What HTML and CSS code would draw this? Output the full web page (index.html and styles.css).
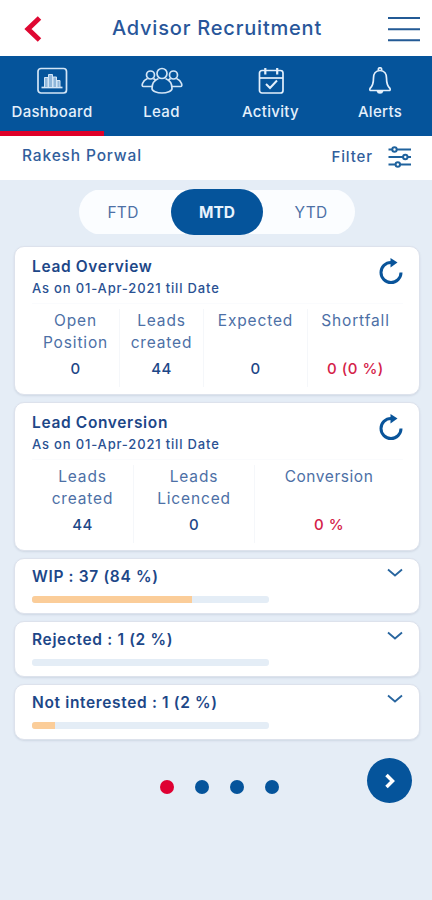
FILE: index.html
```html
<!DOCTYPE html>
<html lang="en">
<head>
    <meta charset="UTF-8">
    <meta name="viewport" content="width=device-width, initial-scale=1.0">
    <title>Advisor Recruitment</title>
    <link rel="stylesheet" href="styles.css">
</head>
<body>

<header class="header">
    <svg class="back" width="18" height="26" viewBox="0 0 18 26"><path d="M15.500 2 4 13l11.500 11" fill="none" stroke="#df0832" stroke-width="5"/></svg>
    <h1>Advisor Recruitment</h1>
    <svg class="menu" width="34" height="26" viewBox="0 0 34 26"><path d="M1 2h32M1 13.300h32M1 24.300h32" stroke="#235a95" stroke-width="2"/></svg>
</header>

<nav class="nav">
    <a class="nav-item active">
        <svg width="32" height="28" viewBox="0 0 32 28" fill="none" stroke="#d3e5f6" stroke-width="1.700">
            <rect x="2" y="1.500" width="28.500" height="24.500" rx="3"/>
            <path d="M5.500 20.500h21"/>
            <path d="M8.500 20V10.500h3.500V20M12.500 20V7.500h4V20M17 20V10h3.500v10M21 20v-6.500h3V20" fill="#8fb6da" stroke-width="1"/>
        </svg>
        <span>Dashboard</span>
    </a>
    <a class="nav-item">
        <svg width="42" height="28" viewBox="0 0 42 28" fill="none" stroke="#d3e5f6" stroke-width="1.700" stroke-linejoin="round">
            <circle cx="21" cy="6.500" r="5"/>
            <circle cx="9.500" cy="8" r="4"/>
            <circle cx="32.500" cy="8" r="4"/>
            <path d="M17.500 11.500c-4 1.500-6.500 5.500-6.500 10 0 2.500 5 4.500 10 4.500s10-2 10-4.500c0-4.500-2.500-8.500-6.500-10"/>
            <path d="M11 19.500H2.500C1 19.500 1 18 1.500 16.500c1-2.500 2.500-4 5-5M12.500 11.500l2.500 2M31 19.500h8.500c1.500 0 1.500-1.500 1-3-1-2.500-2.500-4-5-5M29.500 11.500l-2.500 2"/>
        </svg>
        <span>Lead</span>
    </a>
    <a class="nav-item">
        <svg width="28" height="28" viewBox="0 0 28 28" fill="none" stroke="#e4f0fc" stroke-width="1.700">
            <rect x="2.500" y="3.500" width="23.500" height="22.500" rx="2.500"/>
            <path d="M3 11h23"/>
            <path d="M8.300 1v6.500M20.200 1v6.500" stroke-width="2.200"/>
            <path d="m9 17 4 4 7-7.500" stroke-width="2"/>
        </svg>
        <span>Activity</span>
    </a>
    <a class="nav-item">
        <svg width="24" height="28" viewBox="0 0 24 28" fill="none" stroke="#e4f0fc" stroke-width="1.700" stroke-linejoin="round">
            <path d="M12 3.500c-4.500 0-6.500 3.500-6.500 7.500 0 5-.7 8-3.500 10.500-.5 1.500 0 2 1 2h18c1 0 1.500-.5 1-2-2.800-2.500-3.500-5.500-3.500-10.500 0-4-2-7.500-6.500-7.500z"/>
            <path d="M10.500 3.500C10 1 11 .8 12 .8s2 .2 1.500 2.700"/>
            <path d="M9.500 24c.5 2.500 4.500 2.500 5 0z" fill="#e4f0fc"/>
        </svg>
        <span>Alerts</span>
    </a>
</nav>

<div class="subbar">
    <span class="user">Rakesh Porwal</span>
    <span class="filter">Filter</span>
    <svg width="24" height="22" viewBox="0 0 24 22" fill="none" stroke="#1f629d" stroke-width="2">
        <path d="M.5 3.500h4M8.500 3.500h14.500M.5 11h14.500M19.500 11h3.500M.5 18.500h7M12 18.500h11"/>
        <circle cx="6.500" cy="3.500" r="2.200"/>
        <circle cx="17.300" cy="11" r="2.200"/>
        <circle cx="9.800" cy="18.500" r="2.200"/>
    </svg>
</div>

<main class="content">
    <div class="toggle">
        <button>FTD</button>
        <button class="selected">MTD</button>
        <button class="last">YTD</button>
    </div>

    <section class="card stats-card">
        <div class="card-head">
            <div>
                <h2>Lead Overview</h2>
                <p>As on 01-Apr-2021 till Date</p>
            </div>
            <svg class="refresh" width="24" height="26" viewBox="0 0 24 26"><path d="M12 4.500A10 10 0 1 0 22 14.500" fill="none" stroke="#09549a" stroke-width="3"/><path d="M11.500 0 18.500 4.500l-7 5z" fill="#09549a"/></svg>
        </div>
        <div class="stats overview">
            <div class="stat"><span>Open<br>Position</span><b>0</b></div>
            <div class="stat"><span>Leads<br>created</span><b>44</b></div>
            <div class="stat"><span>Expected</span><b>0</b></div>
            <div class="stat"><span>Shortfall</span><b class="red">0 (0 %)</b></div>
        </div>
    </section>

    <section class="card stats-card">
        <div class="card-head">
            <div>
                <h2>Lead Conversion</h2>
                <p>As on 01-Apr-2021 till Date</p>
            </div>
            <svg class="refresh" width="24" height="26" viewBox="0 0 24 26"><path d="M12 4.500A10 10 0 1 0 22 14.500" fill="none" stroke="#09549a" stroke-width="3"/><path d="M11.500 0 18.500 4.500l-7 5z" fill="#09549a"/></svg>
        </div>
        <div class="stats conversion">
            <div class="stat"><span>Leads<br>created</span><b>44</b></div>
            <div class="stat"><span>Leads<br>Licenced</span><b>0</b></div>
            <div class="stat"><span class="tight">Conversion</span><b class="red">0 %</b></div>
        </div>
    </section>

    <section class="card row-card">
        <div class="row-head">
            <h2>WIP : 37 (84 %)</h2>
            <svg width="16" height="10" viewBox="0 0 16 10"><path d="m1 1.500 7 6 7-6" fill="none" stroke="#28659f" stroke-width="1.800"/></svg>
        </div>
        <div class="bar"><div class="fill" style="width: 67.600%"></div></div>
    </section>

    <section class="card row-card">
        <div class="row-head">
            <h2>Rejected : 1 (2 %)</h2>
            <svg width="16" height="10" viewBox="0 0 16 10"><path d="m1 1.500 7 6 7-6" fill="none" stroke="#28659f" stroke-width="1.800"/></svg>
        </div>
        <div class="bar"></div>
    </section>

    <section class="card row-card">
        <div class="row-head">
            <h2>Not interested : 1 (2 %)</h2>
            <svg width="16" height="10" viewBox="0 0 16 10"><path d="m1 1.500 7 6 7-6" fill="none" stroke="#28659f" stroke-width="1.800"/></svg>
        </div>
        <div class="bar"><div class="fill" style="width: 9.700%"></div></div>
    </section>

    <div class="pager">
        <i class="dot current"></i>
        <i class="dot"></i>
        <i class="dot"></i>
        <i class="dot"></i>
        <button class="next"><svg width="12" height="16" viewBox="0 0 12 16"><path d="m2.500 2 6 6-6 6" fill="none" stroke="#fff" stroke-width="3.500"/></svg></button>
    </div>
</main>

</body>
</html>
```

FILE: styles.css
```css
* {
    box-sizing: border-box;
}

body {
    margin: 0;
    min-height: 900px;
    background-color: #e5edf6;
    color: #1d4788;
    font-family: 'Inter', sans-serif;
    font-size: 15px;
}

h1, h2, p {
    margin: 0;
}

svg {
    display: block;
    flex: none;
}

button {
    border: none;
    padding: 0;
    background: none;
    font-family: inherit;
    cursor: pointer;
}

.header {
    height: 56px;
    padding: 0 11px 0 24px;
    display: flex;
    align-items: center;
    justify-content: space-between;
    background-color: #fff;
}

.header h1 {
    margin-left: 5px;
    font-size: 20px;
    font-weight: 500;
    letter-spacing: 0.800px;
    color: #28569a;
    white-space: nowrap;
}

.back,
.menu {
    margin-top: 2px;
}

/* Navigation */
.nav {
    height: 80px;
    display: grid;
    grid-template-columns: 104px 115px 103px 110px;
    background-color: #05549b;
    color: #e4f0fc;
}

.nav-item {
    padding-top: 11px;
    display: flex;
    flex-direction: column;
    align-items: center;
    gap: 8px;
    font-size: 15px;
    line-height: 18px;
    font-weight: 500;
    letter-spacing: 0.300px;
}

.nav-item.active {
    border-bottom: 5px solid #df0028;
}

.nav-item:last-child {
    padding-left: 6px;
}

.subbar {
    height: 44px;
    padding: 0 20px 3px 22px;
    display: flex;
    align-items: center;
    background-color: #fff;
    color: #315e9c;
    font-weight: 500;
}

.user {
    margin: 0 auto 3px 0;
    font-size: 15.500px;
    letter-spacing: 0.850px;
}

.filter {
    margin-right: 15px;
    letter-spacing: 0.900px;
}

.content {
    padding: 9px 12px 0 14px;
}

/* Period switch */
.toggle {
    width: 276px;
    height: 46px;
    margin: 0 0 11px 65px;
    display: grid;
    grid-template-columns: 92px 92px 92px;
    align-items: center;
    background: linear-gradient(#fbfdff, #fbfdff) center / 100% 44px no-repeat;
    border-radius: 23px;
}

.toggle button {
    height: 46px;
    padding-right: 4px;
    border-radius: 23px;
    font-size: 15.500px;
    letter-spacing: 0.300px;
    color: #4d70a6;
}

.toggle .selected {
    padding-right: 0;
    background-color: #05549b;
    color: #e8f3fd;
    font-weight: 700;
    letter-spacing: 0;
}

.toggle .last {
    padding: 0 0 0 4px;
}

/* Cards */
.card {
    background-color: #fff;
    border: 1px solid #dde2ec;
    border-radius: 10px;
    box-shadow: 0 1px 2px rgba(90, 100, 130, 0.150);
}

.card h2 {
    font-size: 15.500px;
    line-height: 20px;
    font-weight: 600;
    letter-spacing: 0.650px;
    white-space: nowrap;
}

.stats-card {
    height: 149px;
    margin-bottom: 7px;
    padding: 10px 16px 0 17px;
}

.card-head {
    height: 46px;
    display: flex;
    justify-content: space-between;
}

.card-head p {
    margin-top: 1px;
    font-size: 13px;
    line-height: 20px;
    font-weight: 500;
    letter-spacing: 0.830px;
    color: #2a5193;
}

.refresh {
    margin-top: 1px;
}

.stats {
    display: grid;
    border-top: 1px solid #fafbfd;
}

.overview {
    grid-template-columns: 88px 84px 104px 95px;
}

.conversion {
    grid-template-columns: 102px 121px 148px;
}

.stat {
    height: 78px;
    margin-top: 5px;
    padding-top: 1px;
    display: flex;
    flex-direction: column;
    align-items: center;
    justify-content: space-between;
    border-right: 1px solid #f5f7fa;
    text-align: center;
}

.stat:last-child {
    border-right: none;
}

.stat span {
    font-size: 15.500px;
    line-height: 22px;
    letter-spacing: 0.850px;
    color: #4d70a6;
}

.stat .tight {
    letter-spacing: 0.550px;
}

.stat b {
    padding-bottom: 8px;
    font-size: 15px;
    line-height: 20px;
    font-weight: 500;
    letter-spacing: 0.500px;
}

.stat .red {
    color: #d42148;
}

.row-card {
    height: 56px;
    margin-bottom: 7px;
    padding: 8px 16px 0 17px;
}

.row-head {
    display: flex;
    justify-content: space-between;
}

.row-head svg {
    margin-top: 1px;
}

.bar {
    width: 237px;
    height: 7px;
    margin-top: 9px;
    border-radius: 3px;
    background-color: #e4edf6;
    overflow: hidden;
}

.fill {
    height: 100%;
    background-color: #fbcd99;
}

/* Pager */
.pager {
    padding: 11px 8px 0 146px;
    display: flex;
    align-items: center;
    gap: 21px;
}

.dot {
    width: 14px;
    height: 14px;
    margin-top: 13px;
    border-radius: 50%;
    background-color: #05549b;
}

.dot.current {
    background-color: #df0032;
}

.next {
    width: 45px;
    height: 45px;
    margin-left: auto;
    display: flex;
    align-items: center;
    justify-content: center;
    border-radius: 50%;
    background-color: #05549b;
}
```
